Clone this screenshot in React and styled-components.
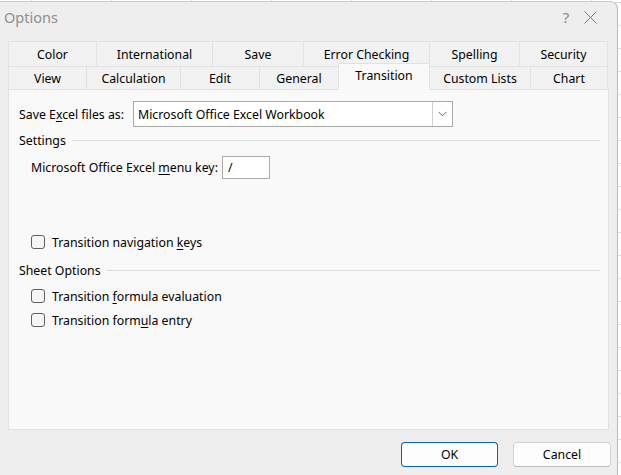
import React from "react";
import styled, { createGlobalStyle } from "styled-components";

const GlobalStyle = createGlobalStyle`
  html, body {
    margin: 0;
    padding: 0;
    overflow: hidden;
  }
  body {
    background-color: #ffffff;
    background-image:
      repeating-linear-gradient(to right, transparent 0, transparent 31px, #d9d9d9 31px, #d9d9d9 32px, transparent 32px, transparent 80px),
      repeating-linear-gradient(to bottom, transparent 0, transparent 2px, #d9d9d9 2px, #d9d9d9 3px, transparent 3px, transparent 23px);
    font-family: "Noto Sans", "Liberation Sans", sans-serif;
    font-size: 12.3px;
    color: #000;
  }
`;

const Window = styled.div`
  width: 617px;
  height: 490px;
  margin-top: 1px;
  background: #eeeeee;
  border-top: 1px solid #c9c9c9;
  border-right: 1px solid #b9b9b9;
  border-top-right-radius: 8px;
  display: flex;
  flex-direction: column;
`;

const TitleBar = styled.div`
  height: 30px;
  display: flex;
  align-items: center;
  padding-left: 4px;
`;

const Title = styled.div`
  flex: 1;
  font-size: 14.5px;
  color: #8f8f8f;
`;

const TitleButton = styled.div`
  width: ${(p) => p.w}px;
  display: flex;
  justify-content: center;
  align-items: center;
  color: #8a8a8a;
  font-size: 15px;
`;

const Body = styled.div`
  padding: 9px 0 0 8px;
`;

const TabRow = styled.div`
  display: flex;
  height: ${(p) => p.h}px;
  align-items: flex-start;
`;

const Tab = styled.div`
  box-sizing: border-box;
  width: ${(p) => p.w}px;
  height: ${(p) => p.h}px;
  display: flex;
  align-items: center;
  justify-content: center;
  background: #f2f2f2;
  border-top: 1px solid #e2e2e2;
  border-right: 1px solid #e2e2e2;
  &:first-child {
    border-left: 1px solid #e2e2e2;
  }
`;

const ActiveTab = styled(Tab)`
  position: relative;
  z-index: 1;
  margin-top: -3px;
  height: ${(p) => p.h + 4}px;
  padding-bottom: 3px;
  background: #f9f9f9;
  border-left: 1px solid #e2e2e2;
  margin-left: -1px;
  width: ${(p) => p.w + 1}px;
`;

const Panel = styled.div`
  box-sizing: border-box;
  width: 601px;
  height: 341px;
  background: #f9f9f9;
  border: 1px solid #e2e2e2;
  padding: 11px 8px 0 10px;
  display: flex;
  flex-direction: column;
`;

const FieldRow = styled.div`
  display: flex;
  align-items: center;
  height: ${(p) => p.h || 24}px;
  margin-top: ${(p) => p.mt || 0}px;
  padding-left: ${(p) => p.indent || 0}px;
  gap: ${(p) => p.gap || 4}px;
`;

const Select = styled.div`
  box-sizing: border-box;
  width: 320px;
  height: 26px;
  background: #fff;
  border: 1px solid #a9a9a9;
  display: flex;
  align-items: center;
  padding-left: 4px;
`;

const SelectText = styled.div`
  flex: 1;
`;

const SelectButton = styled.div`
  box-sizing: border-box;
  width: 20px;
  height: 24px;
  border-left: 1px solid #cfcfcf;
  display: flex;
  align-items: center;
  justify-content: center;
  background: #fff;
`;

const Input = styled.div`
  box-sizing: border-box;
  width: 48px;
  height: 23px;
  background: #fff;
  border: 1px solid #ababab;
  display: flex;
  align-items: center;
  padding-left: 5px;
`;

const GroupHeader = styled.div`
  display: flex;
  align-items: center;
  height: 16px;
  margin-top: ${(p) => p.mt}px;
`;

const GroupLine = styled.div`
  flex: 1;
  height: 1px;
  background: #dcdcdc;
  margin-left: 6px;
`;

const Box = styled.div`
  box-sizing: border-box;
  width: 14px;
  height: 14px;
  border: 1px solid #5f5f5f;
  border-radius: 3px;
  background: #f6f6f6;
  margin-right: 3px;
`;

const Footer = styled.div`
  display: flex;
  justify-content: flex-end;
  gap: 15px;
  padding: 12px 6px 0 0;
`;

const Button = styled.div`
  box-sizing: border-box;
  width: ${(p) => p.w}px;
  height: 25px;
  border-radius: 4px;
  background: #fdfdfd;
  border: 1px solid ${(p) => (p.primary ? "#0067c0" : "#d3d3d3")};
  border-bottom-color: ${(p) => (p.primary ? "#0060b0" : "#bcbcbc")};
  display: flex;
  align-items: center;
  justify-content: center;
`;

const U = styled.span`
  text-decoration: underline;
  text-underline-offset: 2px;
`;

const row1 = [
  ["Color", 89],
  ["International", 116],
  ["Save", 91],
  ["Error Checking", 126],
  ["Spelling", 90],
  ["Security", 88],
];

const row2 = [
  ["View", 79],
  ["Calculation", 94],
  ["Edit", 79],
  ["General", 79],
  ["Transition", 91],
  ["Custom Lists", 101],
  ["Chart", 77],
];

const Checkbox = ({ children }) => (
  <FieldRow indent={12}>
    <Box />
    <span>{children}</span>
  </FieldRow>
);

export default function App() {
  return (
    <>
      <GlobalStyle />
      <Window>
        <TitleBar>
          <Title>Options</Title>
          <TitleButton w={24}>?</TitleButton>
          <TitleButton w={24}>
            <svg width="13" height="13" viewBox="0 0 13 13">
              <path d="M0.5 0.5 L12.5 12.5 M12.5 0.5 L0.5 12.5" stroke="#7a7a7a" strokeWidth="1" fill="none" />
            </svg>
          </TitleButton>
          <div style={{ width: 15 }} />
        </TitleBar>
        <Body>
          <TabRow h={25}>
            {row1.map(([t, w]) => (
              <Tab key={t} w={w} h={25}>
                {t}
              </Tab>
            ))}
          </TabRow>
          <TabRow h={23}>
            {row2.map(([t, w]) =>
              t === "Transition" ? (
                <ActiveTab key={t} w={w} h={23}>
                  {t}
                </ActiveTab>
              ) : (
                <Tab key={t} w={w} h={23}>
                  {t}
                </Tab>
              )
            )}
          </TabRow>
          <Panel>
            <FieldRow h={26} gap={9}>
              <span>
                Save E<U>x</U>cel files as:
              </span>
              <Select>
                <SelectText>Microsoft Office Excel Workbook</SelectText>
                <SelectButton>
                  <svg width="9" height="6" viewBox="0 0 9 6">
                    <path d="M0.5 0.8 L4.5 4.8 L8.5 0.8" stroke="#6a6a6a" strokeWidth="1" fill="none" />
                  </svg>
                </SelectButton>
              </Select>
            </FieldRow>
            <GroupHeader mt={5}>
              <span>Settings</span>
              <GroupLine />
            </GroupHeader>
            <FieldRow h={23} mt={8} indent={12}>
              <span>
                Microsoft Office Excel <U>m</U>enu key:
              </span>
              <Input>/</Input>
            </FieldRow>
            <div style={{ height: 51 }} />
            <Checkbox>
              Transition navigation <U>k</U>eys
            </Checkbox>
            <GroupHeader mt={8}>
              <span>Sheet Options</span>
              <GroupLine />
            </GroupHeader>
            <div style={{ height: 6 }} />
            <Checkbox>
              Transition <U>f</U>ormula evaluation
            </Checkbox>
            <Checkbox>
              Transition form<U>u</U>la entry
            </Checkbox>
          </Panel>
          <Footer>
            <Button primary w={97}>OK</Button>
            <Button w={98}>Cancel</Button>
          </Footer>
        </Body>
      </Window>
    </>
  );
}
